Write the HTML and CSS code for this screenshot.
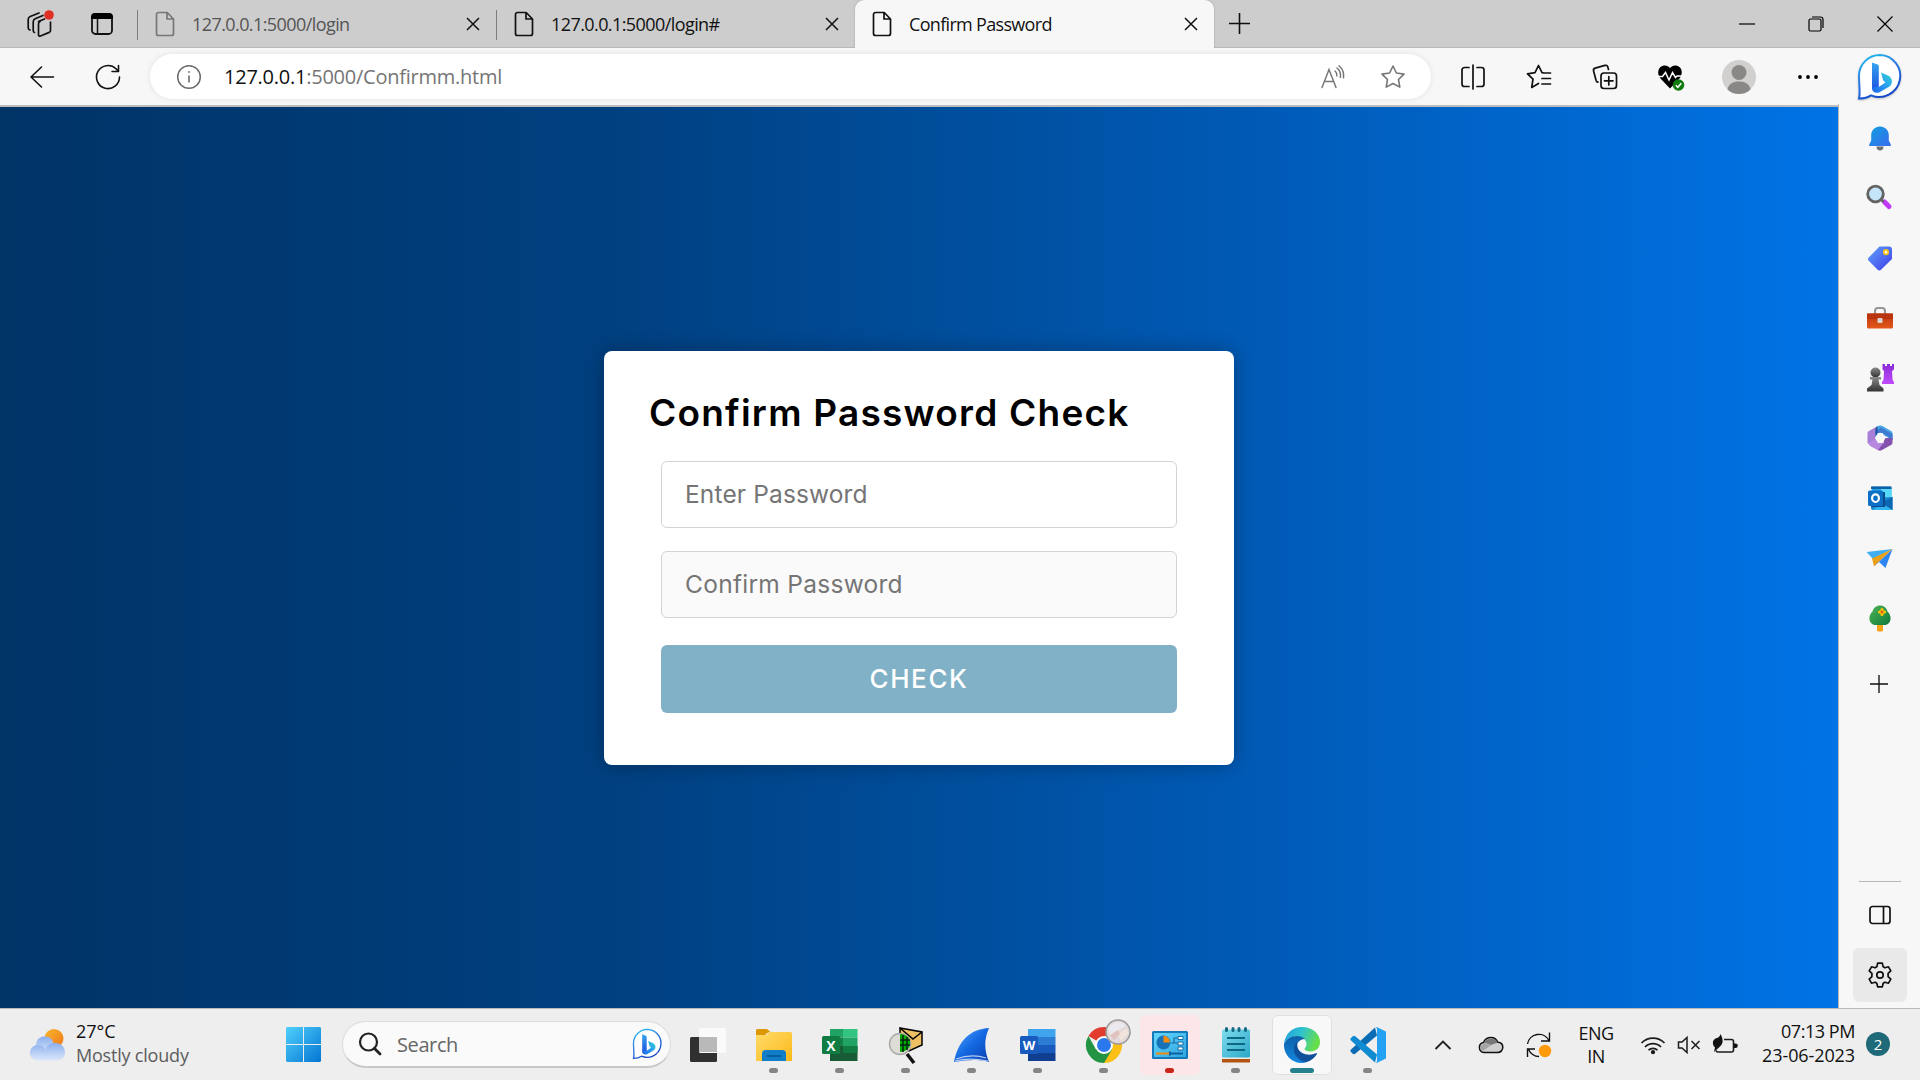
FILE: index.html
```html
<!DOCTYPE html>
<html lang="en">
<head>
<meta charset="utf-8">
<title>Confirm Password</title>
<link rel="stylesheet" href="styles.css">
</head>
<body>
<svg class="defs" width="0" height="0">
  <defs>
    <symbol id="file" viewBox="0 0 20 26"><path d="M3.500 1.500h8.700L18.500 8v14.500a2 2 0 0 1-2 2h-13a2 2 0 0 1-2-2v-19a2 2 0 0 1 2-2z M12 1.500V8h6.500" fill="none" stroke="currentColor" stroke-width="1.700" stroke-linejoin="round"/></symbol>
    <symbol id="x" viewBox="0 0 14 14"><path d="M1 1l12 12M13 1L1 13" fill="none" stroke="currentColor" stroke-width="1.500"/></symbol>
    <symbol id="plus" viewBox="0 0 20 20"><path d="M10 0v20M0 10h20" fill="none" stroke="currentColor" stroke-width="1.500"/></symbol>
    <symbol id="bing" viewBox="0 0 46 48">
      <path d="M23 2a21 21 0 1 1-9 40.300C10 45 6 45.500 2 45.500c1.500-5 0-14 0-22.500A21 21 0 0 1 23 2z" fill="#fff" stroke="url(#bingRing)" stroke-width="2"/>
      <path d="M15 9.500l5.500 2c.9.400 1.300 1 1.300 2v20l-4 5c-2-.5-2.800-2-2.800-4z" fill="url(#bingStem)"/>
      <path d="M24 19.500l7 3c5 2.500 5 8.500 1.500 11l-9.500 5.500c-4 2-8 .5-8-4.500l6.800-.5 6.500-4.500-2.300-2.500z" fill="url(#bingBowl)"/>
    </symbol>
    <linearGradient id="bingRing" x1="0" y1="0" x2=".5" y2="1"><stop offset="0" stop-color="#21c7ee"/><stop offset=".5" stop-color="#2c7be5"/><stop offset="1" stop-color="#1647c8"/></linearGradient>
    <linearGradient id="bingStem" x1="0" y1="0" x2="0" y2="1"><stop offset="0" stop-color="#35a5ee"/><stop offset="1" stop-color="#1d4fe0"/></linearGradient>
    <linearGradient id="bingBowl" x1="0" y1="1" x2="1" y2="0"><stop offset="0" stop-color="#1b63e8"/><stop offset=".5" stop-color="#2a9cf0"/><stop offset="1" stop-color="#30d9d0"/></linearGradient>
    <linearGradient id="blueV" x1="0" y1="0" x2="1" y2="1"><stop offset="0" stop-color="#0e9fdd"/><stop offset="1" stop-color="#3a6cf0"/></linearGradient>
    <linearGradient id="tagG" x1="0" y1="0" x2="1" y2="1"><stop offset="0" stop-color="#62a4fb"/><stop offset="1" stop-color="#3d3be8"/></linearGradient>
    <linearGradient id="purpleV" x1="0" y1="0" x2="0" y2="1"><stop offset="0" stop-color="#8b2bd6"/><stop offset="1" stop-color="#c24bff"/></linearGradient>
    <linearGradient id="greyV" x1="0" y1="0" x2="0" y2="1"><stop offset="0" stop-color="#8a8a8a"/><stop offset="1" stop-color="#333"/></linearGradient>
    <linearGradient id="caseG" x1="0" y1="0" x2="0" y2="1"><stop offset="0" stop-color="#b8360e"/><stop offset="1" stop-color="#e4571b"/></linearGradient>
    <linearGradient id="treeG" x1="0" y1="0" x2="1" y2="1"><stop offset="0" stop-color="#4fb456"/><stop offset="1" stop-color="#0d7a3c"/></linearGradient>
    <linearGradient id="sunG" x1="0" y1="0" x2="1" y2="1"><stop offset="0" stop-color="#f6b72b"/><stop offset="1" stop-color="#f0761c"/></linearGradient>
    <linearGradient id="cloudG" x1="0" y1="0" x2="0" y2="1"><stop offset="0" stop-color="#8db0ee"/><stop offset="1" stop-color="#dbe7fa"/></linearGradient>
    <linearGradient id="winG" gradientUnits="userSpaceOnUse" x1="0" y1="0" x2="35" y2="35"><stop offset="0" stop-color="#4fd0fc"/><stop offset="1" stop-color="#0475d2"/></linearGradient>
    <linearGradient id="folderG" x1="0" y1="0" x2="1" y2="1"><stop offset="0" stop-color="#ffdc6b"/><stop offset="1" stop-color="#fcb819"/></linearGradient>
    <linearGradient id="finG" x1="0" y1="0" x2="1" y2="1"><stop offset="0" stop-color="#5aa7ff"/><stop offset=".5" stop-color="#1469e2"/><stop offset="1" stop-color="#0a3fb0"/></linearGradient>
    <linearGradient id="edgeTop" x1="0" y1="0" x2="1" y2=".3"><stop offset="0" stop-color="#1e9fe0"/><stop offset=".5" stop-color="#2fc2cf"/><stop offset="1" stop-color="#66de4c"/></linearGradient>
    <linearGradient id="edgeLeft" x1="0" y1="0" x2="0" y2="1"><stop offset="0" stop-color="#0d61a8"/><stop offset="1" stop-color="#1487e0"/></linearGradient>
    <linearGradient id="screenG" x1="0" y1="0" x2="1" y2="1"><stop offset="0" stop-color="#63d5fb"/><stop offset="1" stop-color="#2fa6e2"/></linearGradient>
    <linearGradient id="padG" x1="0" y1="0" x2="1" y2="1"><stop offset="0" stop-color="#7fdcec"/><stop offset="1" stop-color="#2ba7c9"/></linearGradient>
  </defs>
</svg>

<header class="tabbar">
  <div class="tab-tools">
    <span class="tool"><svg width="28" height="28" viewBox="0 0 28 28" fill="none" stroke="#111" stroke-width="1.700" stroke-linecap="round" stroke-linejoin="round"><path d="M12.500 11.500l6-2.500M24.500 12v8.500c0 1-.4 1.500-1.300 1.900L14.500 26c-1.200.5-2 0-2-1.200V14c0-1.300.4-2 1.500-2.500M8.500 22.500c-1-.3-1.300-1-1.300-2V12c0-1.500.5-2.500 2-3.200L17 5.500M4 20c-1.200-.4-1.800-1-1.800-2.300V9.500C2.200 8 3 7 4.200 6.500L13 3"/><circle cx="23" cy="5" r="4.800" fill="#e02f24" stroke="none"/></svg></span>
    <span class="tool"><svg width="24" height="24" viewBox="0 0 24 24"><rect x="2" y="2" width="20" height="20" rx="3.500" fill="none" stroke="#111" stroke-width="1.800"/><path d="M1 7V5a4 4 0 0 1 4-4h14a4 4 0 0 1 4 4v2z" fill="#000"/><path d="M7.500 7v15" stroke="#111" stroke-width="1.500"/></svg></span>
  </div>
  <div class="tab tab-dim">
    <svg class="file" width="20" height="26"><use href="#file"/></svg>
    <span class="tab-title">127.0.0.1:5000/login</span>
    <svg class="close" width="14" height="14"><use href="#x"/></svg>
  </div>
  <div class="tab">
    <svg class="file" width="20" height="26"><use href="#file"/></svg>
    <span class="tab-title">127.0.0.1:5000/login#</span>
    <svg class="close" width="14" height="14"><use href="#x"/></svg>
  </div>
  <div class="tab tab-active">
    <svg class="file" width="20" height="26"><use href="#file"/></svg>
    <span class="tab-title">Confirm Password</span>
    <svg class="close" width="14" height="14"><use href="#x"/></svg>
  </div>
  <span class="new-tab"><svg width="21" height="21"><use href="#plus"/></svg></span>
  <div class="window-buttons">
    <span><svg width="16" height="16" viewBox="0 0 16 16"><path d="M0 8h16" stroke="#000" stroke-width="1.200"/></svg></span>
    <span><svg width="16" height="16" viewBox="0 0 16 16" fill="none" stroke="#000" stroke-width="1.200"><rect x="1" y="3" width="12" height="12" rx="1.500"/><path d="M4 1h8.500A2.500 2.500 0 0 1 15 3.500V12"/></svg></span>
    <span><svg width="16" height="16" viewBox="0 0 16 16"><path d="M.5.5l15 15M15.500.5l-15 15" stroke="#000" stroke-width="1.200"/></svg></span>
  </div>
</header>

<div class="browser">
  <div class="view">
    <nav class="toolbar">
      <span class="nav-button"><svg width="26" height="24" viewBox="0 0 26 24" fill="none" stroke="#111" stroke-width="1.600" stroke-linecap="round" stroke-linejoin="round"><path d="M12.500 2L2 12l10.500 10M2 12h22.500"/></svg></span>
      <span class="nav-button refresh"><svg width="26" height="26" viewBox="0 0 26 26" fill="none" stroke="#111" stroke-width="1.600" stroke-linecap="round" stroke-linejoin="round"><path d="M24.500 13A11.500 11.500 0 1 1 21 4.800L23.500 7.500M23.500 1.500v6h-6.500"/></svg></span>
      <div class="address">
        <svg width="26" height="26" viewBox="0 0 26 26" fill="none" stroke="#6b6b6b"><circle cx="13" cy="13" r="11.300" stroke-width="1.500"/><path d="M13 11.500v7" stroke-width="1.600"/><circle cx="13" cy="8" r=".6"/></svg>
        <span class="url"><b>127.0.0.1</b>:5000/Confirmm.html</span>
        <svg class="read" width="24" height="24" viewBox="0 0 24 24" fill="none" stroke="#777" stroke-width="1.500" stroke-linecap="round"><path d="M1 22.500L8 4.500l7 18M3.500 16.500h9M14 6c1.500 1.200 2 3 1.800 4.800M16 3c3 2.500 4 5.500 3.300 9.300M18 .8c4 3.400 5.200 7.400 4.500 12"/></svg>
        <svg width="26" height="26" viewBox="0 0 26 26" fill="none" stroke="#777" stroke-width="1.600" stroke-linejoin="round"><path d="M13 2l3.400 7 7.600 1.100-5.500 5.400 1.300 7.600-6.800-3.600-6.800 3.600 1.300-7.600L2 10.100 9.600 9z"/></svg>
      </div>
      <div class="actions">
        <span><svg width="26" height="26" viewBox="0 0 26 26" fill="none" stroke="#111" stroke-width="1.700" stroke-linecap="round"><path d="M13 1v24M9 3.500H4.500a2.500 2.500 0 0 0-2.500 2.500v14a2.500 2.500 0 0 0 2.500 2.500H9M17 3.500h4.500A2.500 2.500 0 0 1 24 6v14a2.500 2.500 0 0 1-2.500 2.500H17"/></svg></span>
        <span><svg width="26" height="26" viewBox="0 0 26 26" fill="none" stroke="#111" stroke-width="1.700" stroke-linecap="round" stroke-linejoin="round"><path d="M18 9l-2-.3L12.500 1.500 9 8.700l-7.500 1.100L7 15.200l-1.300 8.300 6.800-4M18 9h6.500M16 14.500h8.500M16 20h8.500"/></svg></span>
        <span><svg width="26" height="26" viewBox="0 0 26 26" fill="none" stroke="#111" stroke-width="1.700" stroke-linecap="round" stroke-linejoin="round"><rect x="9" y="9" width="15.500" height="15.500" rx="3"/><path d="M16.800 12.500v8.500M12.500 16.800h8.500M16.500 5.500l-.7-2.500c-.4-1.400-1.500-2-2.900-1.600L3.200 4.100C1.800 4.500 1.200 5.600 1.600 7l2.500 9.500c.3 1 .8 1.600 1.900 1.700"/></svg></span>
        <span><svg width="28" height="28" viewBox="0 0 28 28"><path d="M13 25.500L3.500 15.500C-.5 11 1 4 6 2.800c3-.7 5.300.2 7 2.200 1.700-2 4-2.900 7-2.200C25 4 26.500 11 22.500 15.500z" fill="#000"/><path d="M0 13.500h5.500L8.500 9.500l3.500 7.500 3.500-7.500 3 5 1.500-1.500H26" fill="none" stroke="#fff" stroke-width="1.500"/><circle cx="21.500" cy="22" r="5.800" fill="#107c10"/><path d="M18.800 22.300l2 2 3.500-4" fill="none" stroke="#fff" stroke-width="1.500"/></svg></span>
        <span class="wide"><svg width="34" height="34" viewBox="0 0 34 34"><circle cx="17" cy="17" r="17" fill="#d2d0ce"/><circle cx="17" cy="12.500" r="7.500" fill="#8a8886"/><path d="M5.500 29.500C6.500 24 11 21.500 17 21.500s10.500 2.500 11.500 8C25.500 32.500 21 34 17 34s-8.500-1.500-11.500-4.500z" fill="#8a8886"/></svg></span>
        <span class="wide"><svg width="22" height="6" viewBox="0 0 22 6"><circle cx="3" cy="3" r="1.900"/><circle cx="11" cy="3" r="1.900"/><circle cx="19" cy="3" r="1.900"/></svg></span>
      </div>
    </nav>
    <main class="page">
      <form class="card">
        <h1>Confirm Password Check</h1>
        <input type="password" placeholder="Enter Password">
        <input type="password" class="locked" placeholder="Confirm Password">
        <button type="button">CHECK</button>
      </form>
    </main>
  </div>

  <aside class="sidebar">
    <span class="bing"><svg width="46" height="48"><use href="#bing"/></svg></span>
    <span><svg width="26" height="28" viewBox="0 0 26 28"><path d="M9.500 22.500h7c0 2.500-1.500 4-3.500 4s-3.500-1.500-3.500-4z" fill="#6f6f6f"/><path d="M13 2.500c5 0 8.800 3.800 8.800 8.500v5.500l2 4c.4.900 0 1.500-1 1.500H3.200c-1 0-1.400-.6-1-1.500l2-4V11c0-4.700 3.800-8.500 8.800-8.500z" fill="url(#blueV)"/></svg></span>
    <span><svg width="28" height="28" viewBox="0 0 28 28"><path d="M18.500 18l4.500 4.500" stroke="#c03af5" stroke-width="5" stroke-linecap="round"/><circle cx="9.500" cy="10" r="7.800" fill="#c5e5fb" stroke="#636363" stroke-width="2.800"/><path d="M15 15.500l2.500 2.500" stroke="#636363" stroke-width="2.500"/></svg></span>
    <span><svg width="26" height="26" viewBox="0 0 26 26"><path d="M12.500 1.500H22c2 0 3 1 3 3v9.500L14 24.700c-1 1-2.300 1-3.300 0L1.700 15.800c-1-1-1-2.300 0-3.300z" fill="url(#tagG)"/><circle cx="19" cy="7.200" r="2.200" fill="#fff" stroke="#f5c416" stroke-width="1.800"/></svg></span>
    <span><svg width="28" height="24" viewBox="0 0 28 24"><path d="M9 8V5a3 3 0 0 1 3-3h4a3 3 0 0 1 3 3v3" fill="none" stroke="#949494" stroke-width="2"/><rect x="1" y="7.500" width="26" height="15" rx="1.500" fill="url(#caseG)"/><path d="M1 7.500h26V13H1z" fill="#b9350d"/><rect x="11.500" y="12" width="5" height="5" rx="1" fill="#d5d5d5"/></svg></span>
    <span><svg width="28" height="28" viewBox="0 0 28 28"><path d="M16.500 0h2.500v2h2V0h3v2h2V0h2v5.500l-2 1.500.6 9 1.400 2v2H16v-2l1.500-2 .6-9-1.600-1.500z" fill="url(#purpleV)"/><circle cx="9.500" cy="8.500" r="5" fill="url(#greyV)"/><path d="M4 13h11v2.500h-2.500l1 5.500 4 3.500V27.500H1v-3l4.500-3.500 1-5.500H4z" fill="url(#greyV)"/></svg></span>
    <span><svg width="26" height="28" viewBox="0 0 26 28"><path d="M10 2.500L2 7c-1 .6-1.500 1.300-1.500 2.500V19l8 4.500V10.500L13.500 8z" fill="#a87ed6"/><path d="M10 2.500c2-1.200 3.700-1.400 5.500-.4l8.500 5c1 .6 1.500 1.300 1.500 2.500V16l-8-4.500L8.500 7z" fill="#48a6e4"/><path d="M8.500 7v7l4.500-6 4 2 8.500 6V10L14 3.500z" fill="#3f7bd0"/><path d="M10.500 2.300L8.500 4v8l2-3z" fill="#1b4f9c"/><path d="M25.500 14v4.500c0 1.200-.5 2-1.500 2.600l-9 5c-1.500.8-2.700.8-4 0l-9-5.100 7-3 7.500 1.500 1-5.500z" fill="#8551ae"/><path d="M1 19l8-4 4 4 4-1-6 8.200-8-4.700z" fill="#b688df"/><path d="M11 9h4.500l3 5-3 5H11L8 14z" fill="#f7f7f7"/></svg></span>
    <span><svg width="26" height="26" viewBox="0 0 26 26"><path d="M5 1.500h18a1.500 1.500 0 0 1 1.500 1.500v10H4z" fill="#29a8ea"/><path d="M4 1.500h20.500V4H4z" fill="#0e5fa5"/><path d="M14 4h10.500v9H14z" fill="#56d8fb"/><path d="M4 13l21.500-1v13H6a2 2 0 0 1-2-2z" fill="#1a86d3"/><path d="M14 18l11.500-6v13z" fill="#0d68b3"/><path d="M14 18l11.500 7H6z" fill="#32b4ee"/><rect x="4" y="7" width="14" height="15" fill="#0b4b8c"/><rect x="1" y="5.500" width="15" height="15.500" rx="1.500" fill="#0d6fc5"/><ellipse cx="8.500" cy="13.200" rx="3.400" ry="3.800" fill="none" stroke="#fff" stroke-width="2.200"/></svg></span>
    <span><svg width="28" height="24" viewBox="0 0 28 24"><path d="M.5 6L26.500 3 7 13z" fill="#42aef2"/><path d="M26.500 3L6 12.500 8 20.500z" fill="#eba019"/><path d="M26.500 3L8 20.500l4.500-5L19.500 22z" fill="#2e86f2"/></svg></span>
    <span><svg width="26" height="28" viewBox="0 0 26 28"><path d="M10 20h6v6a1.500 1.500 0 0 1-1.500 1.500h-3A1.500 1.500 0 0 1 10 26z" fill="#f5a313"/><path d="M13 1.500c4 0 6.500 2.500 7.500 6 2 2 3.500 4.500 3 8-.5 3.500-3 5.500-6.500 5.500H9c-3.500 0-6-2-6.500-5.500-.5-3.500 1-6 3-8 1-3.500 3.500-6 7.500-6z" fill="url(#treeG)"/><path d="M15 5.500v5M12.500 8h5" stroke="#fbc40e" stroke-width="3.200" stroke-linecap="round"/><circle cx="15" cy="8" r="1.400" fill="#dd5b12"/></svg></span>
    <span class="add"><svg width="18" height="18"><use href="#plus"/></svg></span>
    <hr>
    <span class="panel"><svg width="22" height="20" viewBox="0 0 22 20" fill="none" stroke="#111" stroke-width="1.700"><rect x="1" y="1.500" width="20" height="17" rx="2.500"/><path d="M14.500 1.500v17"/></svg></span>
    <span class="settings"><svg width="26" height="26" viewBox="0 0 26 26" fill="none" stroke="#111" stroke-width="1.700" stroke-linejoin="round"><path d="M10.700 1.200h4.600l.9 3.600 1.700 1 3.600-1 2.300 4-2.700 2.600v3.200l2.700 2.600-2.300 4-3.600-1-1.700 1-.9 3.600h-4.600l-.9-3.600-1.700-1-3.600 1-2.300-4 2.700-2.600v-3.200L2.200 8.800l2.300-4 3.600 1 1.700-1z"/><circle cx="13" cy="13" r="3.200"/></svg></span>
  </aside>
</div>

<footer class="taskbar">
  <div class="weather">
    <svg width="38" height="32" viewBox="0 0 38 32"><circle cx="26" cy="9.500" r="9.500" fill="url(#sunG)"/><path d="M8 15.500C8.500 10 12 7.500 17 7.500c5 0 8 3 8.500 7.500v10H8z" fill="url(#cloudG)"/><path d="M8.500 31.500A7.800 7.800 0 0 1 9 16c4-.3 7 1.500 8.500 4.500C19 16 22.500 14 27 14c6 0 10 4 10 9s-3.500 8.500-8.500 8.500z" fill="url(#cloudG)"/></svg>
    <p><span class="temp">27°C</span><br><span class="sky">Mostly cloudy</span></p>
  </div>
  <span class="start"><svg width="35" height="35" viewBox="0 0 35 35"><path d="M1 0h16v17H0V1zM18 0h16l1 1v16H18zM0 18h17v17H1l-1-1zM18 18h17v16l-1 1H18z" fill="url(#winG)"/></svg></span>
  <div class="search">
    <svg width="24" height="24" viewBox="0 0 24 24" fill="none" stroke="#222" stroke-width="2.200" stroke-linecap="round"><circle cx="10.500" cy="10" r="8.500"/><path d="M16.500 16.500l5.500 5.500" stroke-width="2.800"/></svg>
    <span>Search</span>
    <svg width="31" height="32"><use href="#bing"/></svg>
  </div>
  <div class="apps">
    <span class="app"><svg width="36" height="36" viewBox="0 0 36 36"><rect x="0" y="10" width="27" height="25" rx="1.500" fill="#303030"/><rect x="9" y="1" width="27" height="25" rx="1.500" fill="#fafafa"/><path d="M9 10h18v15H9z" fill="#b9b9b9"/></svg></span>
    <span class="app running"><svg width="36" height="36" viewBox="0 0 36 36"><path d="M0 3.500A1.500 1.500 0 0 1 1.500 2H11l4 3.500h-3L9 8H0z" fill="#dd9806"/><path d="M0 8h10.500l3.500-3h20.500A1.500 1.500 0 0 1 36 6.500V34H0z" fill="url(#folderG)"/><path d="M6 34v-7.500a3.500 3.500 0 0 1 3.500-3.500h17a3.500 3.500 0 0 1 3.500 3.500V34z" fill="#107dc8"/><path d="M11 29h14" stroke="#075999" stroke-width="1.800"/></svg></span>
    <span class="app running"><svg width="36" height="36" viewBox="0 0 36 36"><path d="M8 2h13v8.500H8z" fill="#21a366"/><path d="M21 2h14.500v8.500H21z" fill="#33c481"/><path d="M8 10.500h13V19H8z" fill="#138048"/><path d="M21 10.500h14.500V19H21z" fill="#21a366"/><path d="M8 19h27.500v15H8z" fill="#185c37"/><path d="M21 19h14.500v7H21z" fill="#107c41"/><rect y="9" width="18" height="18" rx="1.500" fill="#107c41"/><text x="9" y="23.500" class="glyph">X</text></svg></span>
    <span class="app running"><svg width="36" height="38" viewBox="0 0 36 38"><path d="M12 2l22 4v13l-13 6-9-5z" fill="#efbf63" stroke="#000" stroke-width="1.500"/><path d="M12 2l13 11 9-7" fill="none" stroke="#000" stroke-width="1.500"/><circle cx="12" cy="18" r="10.500" fill="#dedcd6" stroke="#aaa" stroke-width="1.500"/><path d="M12 8c7 0 11 5 10 11-1 4-5 7-10 7z" fill="#0a0"/><path d="M15 9v17M19 11v13M12 14h10M12 19h10" stroke="#021" stroke-width="1.500"/><path d="M19 28l7 9" stroke="#111" stroke-width="3.500"/></svg></span>
    <span class="app running"><svg width="36" height="36" viewBox="0 0 36 36"><path d="M0 35C4 14 16 2 35 1c-5 11-5 22 0 34-11-3-23-2-35 0z" fill="url(#finG)"/><path d="M2 32c11-4 21-4 30-1M1 34c11-3 22-2 33 0" fill="none" stroke="#b7ccf3" stroke-width="1.200"/></svg></span>
    <span class="app running"><svg width="36" height="36" viewBox="0 0 36 36"><path d="M8 2h27.500v8H8z" fill="#41a5ee"/><path d="M8 10h27.500v8H8z" fill="#2b7cd3"/><path d="M8 18h27.500v8H8z" fill="#185abd"/><path d="M8 26h27.500v8H8z" fill="#103f91"/><rect y="9" width="18" height="18" rx="1.500" fill="#185abd"/><text x="9" y="23" class="glyph small">W</text></svg></span>
    <span class="app running"><svg width="36" height="36" viewBox="0 0 36 36"><path d="M18 18L2.400 9A18 18 0 0 1 33.600 9z" fill="#e33b2e"/><path d="M18 18V9h15.600A18 18 0 0 1 18 36z" fill="#fbbf16"/><path d="M2.400 9A18 18 0 0 0 18 36l8-13.500L18 18l-8 4.500z" fill="#229342"/><circle cx="18" cy="18" r="9" fill="#fff"/><circle cx="18" cy="18" r="7" fill="#2b78ee"/></svg>
      <svg class="profile" width="26" height="26" viewBox="0 0 26 26"><circle cx="13" cy="13" r="12" fill="#e2d8d8" stroke="#999" stroke-width="1.500"/><path d="M3 9c5-7 13-8 18-2l-7 4-9 6z" fill="#ece9ee"/><path d="M13 16l8-7 3 5-8 8z" fill="#f1e4dd"/><path d="M5 16l8-5 2 4-6 6z" fill="#e0c3be"/></svg></span>
    <span class="app running alert"><svg width="36" height="28" viewBox="0 0 36 28"><rect width="36" height="28" rx="1.500" fill="#1479b8"/><rect x="2" y="2" width="32" height="24" fill="url(#screenG)"/><circle cx="11.500" cy="11.500" r="7" fill="#1673b9"/><path d="M11.500 11.500v-7a7 7 0 0 1 6.500 7z" fill="#f58b0b"/><path d="M19 12h3V7h4M22 12h4" fill="none" stroke="#1c6c9e" stroke-width="1.200"/><path d="M26 5.500h5v3h-5zM26 11h5v3h-5zM26 16h5v3h-5z" fill="#fff" stroke="#146ba3"/><path d="M4 22.500h14" stroke="#f58b0b" stroke-width="2"/><path d="M18 22.500h13M18 20.500v4" stroke="#0e5f9b" stroke-width="2"/></svg></span>
    <span class="app running"><svg width="28" height="36" viewBox="0 0 28 36"><path d="M0 31h28v4.500H0z" fill="#b35413"/><path d="M0 29h28v3H0z" fill="#e9edee"/><rect y="2.500" width="28" height="28" rx="1.500" fill="url(#padG)"/><path d="M4.500 1.500v2M11 1.500v2M17 1.500v2M23.500 1.500v2" stroke="#126a83" stroke-width="3" stroke-linecap="round"/><path d="M5 11h18M5 17h18M5 23h18" stroke="#0d6884" stroke-width="2"/></svg></span>
    <span class="app running current"><svg width="36" height="36" viewBox="0 0 36 36"><path d="M0 17C1 7 8 0 18 0c11 0 18 7 18 15 0 6-4 9.500-9.500 9.500-3.500 0-6-1-6-2.500 0-1 2-2 2-5 0-4-4-7.500-10-7.500S2 12 0 17z" fill="url(#edgeTop)"/><path d="M0 17c2-5 7-8 13-8 3 0 6 1 8 3-6 0-9.500 5-8.500 11C13.500 29 17 34 23 35c-2 .7-3.500 1-5 1C8 36-.5 28 0 17z" fill="url(#edgeLeft)"/><path d="M13 15c-4 4-4 10-.5 14.500C16 34 20 35.500 23 35c4-1.300 7.500-4 10-8 .4-.8-.3-1-1-.7-7 3.200-17 .7-18.500-6.300-.4-2 0-3.800-.5-5z" fill="#10509a"/></svg></span>
    <span class="app running"><svg width="36" height="36" viewBox="0 0 36 36"><path d="M1 22.500L25 .5l2 8L5.500 26.500c-1 .9-2 .8-3 0L1 25c-.8-.8-.8-1.700 0-2.500z" fill="#0b6cb5"/><path d="M1 13.500L25 35.500l2-8L5.500 9.500c-1-.9-2-.8-3 0L1 11c-.8.800-.8 1.700 0 2.500z" fill="#108ad0"/><path d="M25 1c.7-.7 1.700-1 2.700-.5L36 4.500v27l-8.300 4c-1 .5-2 .2-2.700-.5 1.500.7 2-.1 2-1.500V2.500C27 1.100 26.500.3 25 1z" fill="#24a1f2"/></svg></span>
  </div>
  <div class="tray">
    <span><svg width="18" height="10" viewBox="0 0 18 10"><path d="M1.500 9L9 1.500 16.500 9" fill="none" stroke="#222" stroke-width="1.900"/></svg></span>
    <span><svg width="26" height="18" viewBox="0 0 26 18"><path d="M6 16.500a5 5 0 0 1-.5-9.900C6.500 3.500 9.500 1.500 13 1.500c3.300 0 5.700 2 6.800 4.800 3.200.1 5 2.400 5 5s-2 5.200-5 5.200z" fill="#cfcfcf" stroke="#111" stroke-width="1.500"/><path d="M6 6.500c4-5.500 11-5.500 13.500 0L13 9z" fill="#777"/><path d="M2 11.500l4-4.500 7 2.500-9 6z" fill="#a5a5a5"/></svg></span>
    <span><svg width="26" height="26" viewBox="0 0 26 26" fill="none" stroke="#111" stroke-width="1.400"><path d="M1.500 12A11.500 11.500 0 0 1 23 8.500M23.500 .5v8.500h-8.500M13 24.500c-4.500 0-8-2-10.500-7M1.500 25v-8H9"/><circle cx="19" cy="19" r="6.200" fill="#ff9a0a" stroke="none"/></svg></span>
    <p class="lang">ENG<br>IN</p>
    <span class="narrow"><svg width="26" height="20" viewBox="0 0 26 20" fill="none" stroke="#1c1c1c" stroke-width="1.700"><path d="M1.500 8a16 16 0 0 1 23 0M5 12a11 11 0 0 1 16 0M8.500 15.200a6.500 6.500 0 0 1 9 0"/><circle cx="13" cy="17.200" r="1.300" fill="#1c1c1c"/></svg></span>
    <span class="narrow"><svg width="24" height="18" viewBox="0 0 24 18" fill="none" stroke="#1c1c1c" stroke-width="1.500"><path d="M1.500 6H5l5-4.500v15L5 12H1.500zM14.500 5l8 8M22.500 5l-8 8"/></svg></span>
    <span class="narrow"><svg width="26" height="20" viewBox="0 0 26 20"><path d="M12 4.500h7.500a2 2 0 0 1 2 2V15a2 2 0 0 1-2 2H6a2 2 0 0 1-2-1.500" fill="none" stroke="#1c1c1c" stroke-width="1.600"/><path d="M22 8.500h1.500a2.300 2.300 0 0 1 0 4.600H22z" fill="#111"/><path d="M8.500-1c2.500 5 3.500 9-1 13L2 17l1-4.500C-.5 9 .5 4 5 3c2-.5 3-2 3.500-4z" fill="#111"/></svg></span>
    <p class="clock"><span class="time">07:13 PM</span><br><span>23-06-2023</span></p>
    <span class="badge">2</span>
  </div>
</footer>
</body>
</html>
```
FILE: styles.css
```css
* { box-sizing: border-box; }

body {
  margin: 0;
  width: 1920px;
  height: 1080px;
  display: flex;
  flex-direction: column;
  overflow: hidden;
  font-family: "Open Sans", "Noto Sans", sans-serif;
  color: #111;
  background: #f7f7f7;
}

.defs { position: absolute; }
svg { display: block; flex: none; overflow: visible; }
p { margin: 0; }

/* tab strip */
.tabbar {
  height: 48px;
  flex: none;
  display: flex;
  align-items: stretch;
  background: #cdcdcd;
  box-shadow: inset 0 -1px #b9b9b9;
}
.tab-tools { width: 137px; display: flex; align-items: center; padding-left: 26px; gap: 36px; }
.tab {
  width: 359px;
  display: flex;
  align-items: center;
  padding: 0 16px 0 18px;
  background: linear-gradient(#7d7d7d, #7d7d7d) 0 10px / 1px 30px no-repeat;
}
.tab-title { flex: 1; padding-left: 17px; font-size: 18px; letter-spacing: -.58px; white-space: nowrap; }
.tab-dim .file { color: #777; }
.tab-dim .tab-title { color: #555; }
.tab-active {
  width: 359px;
  padding: 0 16px 0 17px;
  background: #f7f7f7;
  border-radius: 9px 9px 0 0;
  box-shadow: 0 0 2px #999;
  clip-path: inset(0 -3px 0 -3px);
}
.tab-active .tab-title { letter-spacing: -.68px; }
.new-tab { display: flex; align-items: center; padding-left: 15px; }
.new-tab svg { margin-bottom: 2px; }
.window-buttons { margin-left: auto; margin-right: 1px; display: flex; }
.window-buttons span { width: 69px; display: flex; align-items: center; justify-content: center; }

/* browser body */
.browser { height: 960px; flex: none; display: flex; }
.view { width: 1839px; display: flex; flex-direction: column; border-right: 1px solid #b8b8b8; border-image: linear-gradient(#f7f7f7 57px, #b8b8b8 57px) 1; }

.toolbar {
  height: 59px;
  flex: none;
  display: flex;
  align-items: center;
  padding: 0 0 0 29px;
  border-bottom: 2px solid #bcbcbc;
  background: #f7f7f7;
}
.nav-button { flex: none; width: 66px; }
.nav-button.refresh { width: 55px; }
.address {
  flex: none;
  width: 1281px;
  height: 45px;
  display: flex;
  align-items: center;
  padding: 0 25px 0 26px;
  border-radius: 23px;
  background: #fff;
  box-shadow: 0 0 6px rgba(0, 0, 0, .09);
}
.url { flex: 1; padding-left: 22px; font-size: 20px; letter-spacing: -.24px; color: #757575; }
.url b { font-weight: 400; color: #111; }
.read { margin-right: 35px; }
.actions { flex: none; display: flex; align-items: center; padding-left: 9px; }
.actions span { width: 66px; display: flex; justify-content: center; }
.actions .wide { width: 69px; }

/* page */
.page {
  flex: 1;
  display: flex;
  align-items: center;
  justify-content: center;
  background: linear-gradient(to right, #003366, #004080, #0059b3, #0073e6);
}
.card {
  width: 630px;
  height: 414px;
  padding: 34px 57px 0;
  border-radius: 8px;
  background: #fff;
  box-shadow: 0 0 20px rgba(0, 0, 0, .3);
  font-family: Inter, sans-serif;
}
.card h1 {
  margin: 0 -12px 20px;
  font-size: 37px;
  line-height: 56px;
  font-weight: 600;
  letter-spacing: 1.230px;
  color: #000;
  white-space: nowrap;
}
.card input {
  display: block;
  width: 516px;
  height: 67px;
  margin: 0 0 23px;
  padding: 0 22px 0 23px;
  border: 1px solid #d3d3d3;
  border-radius: 6px;
  background: #fff;
  font: 400 24.5px Inter, sans-serif;
  letter-spacing: .14px;
}
.card input::placeholder { color: #757575; }
.card .locked { margin-bottom: 27px; background: #fafafa; letter-spacing: .28px; }
.card button {
  display: block;
  width: 516px;
  height: 68px;
  padding: 0;
  border: 0;
  border-radius: 6px;
  background: #80b1c6;
  color: #fff;
  font: 500 26px Inter, sans-serif;
  letter-spacing: 1.600px;
}

/* sidebar */
.sidebar { flex: 1; display: flex; flex-direction: column; align-items: center; background: #f7f7f7; }
.sidebar > span { height: 60px; display: flex; align-items: center; justify-content: center; }
.sidebar .bing { height: 60px; padding-bottom: 2px; filter: drop-shadow(0 1px 1px rgba(0, 0, 0, .2)); }
.sidebar .add { height: 71px; margin-right: 1px; }
.sidebar hr { width: 42px; height: 1px; margin: auto 0 7px; border: 0; background: #b8b8b8; }
.sidebar .panel { height: 52px; }
.sidebar .settings { width: 54px; height: 54px; margin: 7px 0 6px; border-radius: 6px; background: #e9e9e9; }

/* taskbar */
.taskbar {
  height: 72px;
  flex: none;
  display: flex;
  align-items: center;
  border-top: 1px solid #bababa;
  background: #eee;
}
.weather { width: 286px; padding-left: 28px; display: flex; align-items: center; gap: 10px; }
.weather p, .tray p { font-size: 18px; line-height: 24px; white-space: nowrap; padding-bottom: 3px; }
.sky { color: #5c5c5c; letter-spacing: -.2px; }
.start { width: 56px; }
.search {
  width: 329px;
  height: 47px;
  display: flex;
  align-items: center;
  padding: 0 7px 0 15px;
  border: 1px solid #dcdcdc;
  border-bottom: 2px solid #c8c8c8;
  border-radius: 24px;
  background: #fafafa;
}
.search span { flex: 1; padding-left: 15px; font-size: 20px; letter-spacing: -.4px; color: #666; }
.apps { display: flex; gap: 6px; padding-left: 7px; }
.app { position: relative; width: 60px; height: 60px; display: flex; align-items: center; justify-content: center; border-radius: 6px; }
.running::after { content: ""; position: absolute; left: 25px; bottom: 2px; width: 9px; height: 5px; border-radius: 3px; background: #858585; }
.alert { background: #fde6e7; }
.alert::after { background: #c8281c; }
.current { background: #f8f8f8; border: 1px solid #e0e0e0; }
.current::after { left: 17px; bottom: 1px; width: 24px; background: #26818f; }
.profile { position: absolute; left: 31px; top: 4px; }
.glyph { fill: #fff; font: 700 14px "Open Sans", sans-serif; text-anchor: middle; }
.glyph.small { font-size: 13px; }

.tray { margin-left: auto; display: flex; align-items: center; padding-right: 30px; }
.tray > span { width: 48px; display: flex; justify-content: center; }
.tray > .narrow { width: 36px; }
.tray .lang { width: 66px; margin-right: 6px; padding-bottom: 0; text-align: center; letter-spacing: -.6px; line-height: 23px; }
.tray .clock { width: 112px; text-align: right; letter-spacing: -.1px; }
.tray .time { letter-spacing: -.45px; }
.tray > .badge { width: 24px; height: 24px; margin-left: 11px; margin-bottom: 1px; border-radius: 50%; align-items: center; background: #1f6a78; color: #fff; font-size: 15px; }
```
